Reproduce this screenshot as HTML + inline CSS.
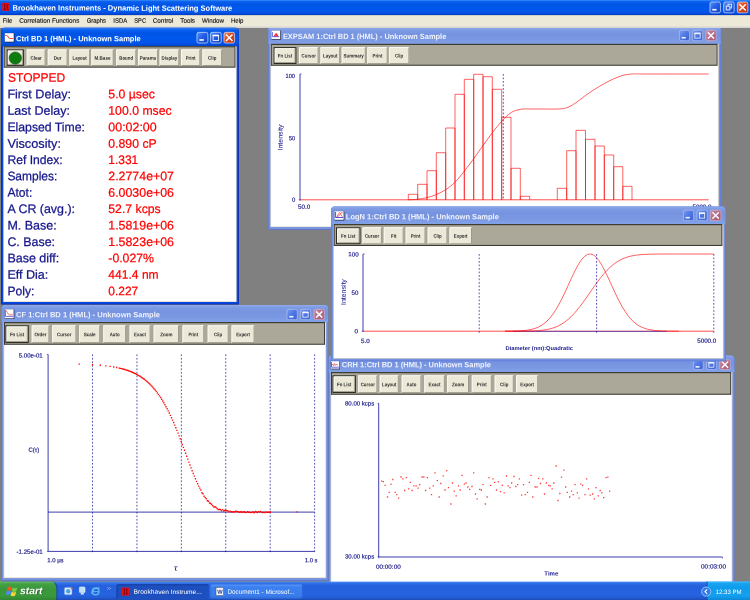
<!DOCTYPE html><html><head><meta charset="utf-8"><title>Brookhaven Instruments - Dynamic Light Scattering Software</title>
<style>
html,body{margin:0;padding:0}
body{width:750px;height:600px;overflow:hidden;background:#808080;position:relative;font-family:"Liberation Sans",sans-serif}
.l{position:absolute;left:0;top:0;width:750px;height:600px}
#scr{position:absolute;left:-20px;top:-20px;width:790px;height:640px;background:#808080;filter:blur(0.32px)}
#scr>div{position:absolute;left:20px;top:20px;width:750px;height:600px}
svg{position:absolute;left:0;top:0;overflow:visible;will-change:transform}
svg text{font-family:"Liberation Sans",sans-serif;white-space:pre;text-rendering:geometricPrecision}
</style></head><body>
<div id="scr"><div>
<svg width="0" height="0" style="position:absolute"><defs><linearGradient id="gtM" x1="0" y1="0" x2="0" y2="1"><stop offset="0" stop-color="#3a8cfa"/><stop offset="0.1" stop-color="#0b62ee"/><stop offset="0.28" stop-color="#0055e6"/><stop offset="0.55" stop-color="#0058ec"/><stop offset="0.8" stop-color="#0356ea"/><stop offset="0.93" stop-color="#0046d2"/><stop offset="1" stop-color="#0034b8"/></linearGradient><linearGradient id="gtA" x1="0" y1="0" x2="0" y2="1"><stop offset="0" stop-color="#2f7ff8"/><stop offset="0.12" stop-color="#0a5fee"/><stop offset="0.3" stop-color="#0054e4"/><stop offset="0.6" stop-color="#0058ec"/><stop offset="0.85" stop-color="#0352e4"/><stop offset="1" stop-color="#0040c8"/></linearGradient><linearGradient id="gtI" x1="0" y1="0" x2="0" y2="1"><stop offset="0" stop-color="#8fabec"/><stop offset="0.14" stop-color="#7d9ae4"/><stop offset="0.4" stop-color="#7693e0"/><stop offset="0.7" stop-color="#7a98e2"/><stop offset="1" stop-color="#82a2e8"/></linearGradient><linearGradient id="gbA" x1="0" y1="0" x2="1" y2="1"><stop offset="0" stop-color="#5a94f6"/><stop offset="0.45" stop-color="#2560e8"/><stop offset="1" stop-color="#143ec0"/></linearGradient><linearGradient id="gcA" x1="0" y1="0" x2="1" y2="1"><stop offset="0" stop-color="#ee8a68"/><stop offset="0.45" stop-color="#de4a20"/><stop offset="1" stop-color="#b82c0c"/></linearGradient><linearGradient id="gbI" x1="0" y1="0" x2="1" y2="1"><stop offset="0" stop-color="#7c9cf0"/><stop offset="0.5" stop-color="#4e76e4"/><stop offset="1" stop-color="#3c60d2"/></linearGradient><linearGradient id="gcI" x1="0" y1="0" x2="1" y2="1"><stop offset="0" stop-color="#cc8ea2"/><stop offset="0.5" stop-color="#b86880"/><stop offset="1" stop-color="#a6546e"/></linearGradient><linearGradient id="gTask" x1="0" y1="0" x2="0" y2="1"><stop offset="0" stop-color="#4a8ef4"/><stop offset="0.09" stop-color="#2f6fe8"/><stop offset="0.22" stop-color="#2560dc"/><stop offset="0.7" stop-color="#2663e0"/><stop offset="0.88" stop-color="#2259d0"/><stop offset="1" stop-color="#1a45a8"/></linearGradient><linearGradient id="gStart" x1="0" y1="0" x2="0" y2="1"><stop offset="0" stop-color="#6cbc6c"/><stop offset="0.12" stop-color="#43a043"/><stop offset="0.4" stop-color="#3a963a"/><stop offset="0.75" stop-color="#3b983b"/><stop offset="1" stop-color="#2f842f"/></linearGradient><linearGradient id="gTray" x1="0" y1="0" x2="0" y2="1"><stop offset="0" stop-color="#3cc0fa"/><stop offset="0.1" stop-color="#18a4f0"/><stop offset="0.3" stop-color="#109cec"/><stop offset="0.75" stop-color="#13a0ee"/><stop offset="1" stop-color="#0c86d4"/></linearGradient><linearGradient id="gTb2" x1="0" y1="0" x2="0" y2="1"><stop offset="0" stop-color="#5a98f8"/><stop offset="0.18" stop-color="#3c80f0"/><stop offset="0.8" stop-color="#3a7cec"/><stop offset="1" stop-color="#2f68d4"/></linearGradient></defs></svg>
<div class="l"><svg width="750" height="600" viewBox="0 0 750 600"><rect x="-20.00" y="-20.00" width="790.00" height="20.50" fill="#3a8cfa"/><rect x="-20.00" y="0.00" width="790.00" height="15.20" fill="url(#gtM)"/><rect x="-20.00" y="15.20" width="790.00" height="11.60" fill="#ece9d8"/><rect x="-20.00" y="26.70" width="790.00" height="1.00" fill="#fbfaf5"/><rect x="2.20" y="2.80" width="7.20" height="8.10" fill="#e8101c"/><path d="M3.4 4.2h2.4M4.6 4.2v5.4M3.4 9.6h2.4M8.6 4.4h-1.6v5h1.6M7 6.9h1.2" stroke="#7a0008" stroke-width="0.9" fill="none"/><text x="12.50" y="10.56" transform="rotate(0.04 12.5 10.6)" font-size="7.7" fill="#fff" font-weight="bold" textLength="219.80" lengthAdjust="spacingAndGlyphs">Brookhaven Instruments - Dynamic Light Scattering Software</text><text x="2.70" y="22.76" transform="rotate(0.04 2.7 22.8)" font-size="6.3" fill="#0a0a0a" textLength="9.60" lengthAdjust="spacingAndGlyphs" stroke="#0a0a0a" stroke-width="0.12">File</text><text x="19.30" y="22.76" transform="rotate(0.04 19.3 22.8)" font-size="6.3" fill="#0a0a0a" textLength="60.00" lengthAdjust="spacingAndGlyphs" stroke="#0a0a0a" stroke-width="0.12">Correlation Functions</text><text x="86.70" y="22.76" transform="rotate(0.04 86.7 22.8)" font-size="6.3" fill="#0a0a0a" textLength="19.30" lengthAdjust="spacingAndGlyphs" stroke="#0a0a0a" stroke-width="0.12">Graphs</text><text x="113.30" y="22.76" transform="rotate(0.04 113.3 22.8)" font-size="6.3" fill="#0a0a0a" textLength="14.00" lengthAdjust="spacingAndGlyphs" stroke="#0a0a0a" stroke-width="0.12">ISDA</text><text x="134.30" y="22.76" transform="rotate(0.04 134.3 22.8)" font-size="6.3" fill="#0a0a0a" textLength="11.70" lengthAdjust="spacingAndGlyphs" stroke="#0a0a0a" stroke-width="0.12">SPC</text><text x="152.70" y="22.76" transform="rotate(0.04 152.7 22.8)" font-size="6.3" fill="#0a0a0a" textLength="20.60" lengthAdjust="spacingAndGlyphs" stroke="#0a0a0a" stroke-width="0.12">Control</text><text x="180.30" y="22.76" transform="rotate(0.04 180.3 22.8)" font-size="6.3" fill="#0a0a0a" textLength="14.70" lengthAdjust="spacingAndGlyphs" stroke="#0a0a0a" stroke-width="0.12">Tools</text><text x="202.00" y="22.76" transform="rotate(0.04 202.0 22.8)" font-size="6.3" fill="#0a0a0a" textLength="22.00" lengthAdjust="spacingAndGlyphs" stroke="#0a0a0a" stroke-width="0.12">Window</text><text x="230.90" y="22.76" transform="rotate(0.04 230.9 22.8)" font-size="6.3" fill="#0a0a0a" textLength="12.60" lengthAdjust="spacingAndGlyphs" stroke="#0a0a0a" stroke-width="0.12">Help</text><rect x="709.95" y="1.95" width="10.50" height="10.90" rx="1.7" fill="url(#gbA)" stroke="#e6ecfc" stroke-opacity="0.95" stroke-width="0.7"/><rect x="712.29" y="8.91" width="4.26" height="1.6" fill="#fff"/><rect x="723.65" y="1.95" width="10.50" height="10.90" rx="1.7" fill="url(#gbA)" stroke="#e6ecfc" stroke-opacity="0.95" stroke-width="0.7"/><rect x="728.02" y="4.12" width="3.65" height="3.85" fill="none" stroke="#fff" stroke-width="0.8"/><rect x="726.22" y="6.12" width="3.65" height="3.85" fill="#2a64e8" stroke="#fff" stroke-width="0.8"/><rect x="737.35" y="1.95" width="10.50" height="10.90" rx="1.7" fill="url(#gcA)" stroke="#e6ecfc" stroke-opacity="0.95" stroke-width="0.7"/><path d="M739.41 4.21L745.79 10.59M745.79 4.21L739.41 10.59" stroke="#fff" stroke-width="1.5" fill="none"/></svg></div>
<div class="l"><svg width="750" height="600" viewBox="0 0 750 600"><path d="M268.10 229.70V29.10Q268.10 27.90 269.30 27.90H719.80Q721.00 27.90 721.00 29.10V229.70Z" fill="#6079d4"/><path d="M268.80 228.90V29.28Q268.80 28.20 269.88 28.20H719.22Q720.30 28.20 720.30 29.28V228.90Z" fill="#7390e2"/><path d="M268.40 44.10V29.10Q268.40 27.90 269.60 27.90H719.50Q720.70 27.90 720.70 29.10V44.10Z" fill="url(#gtI)"/><rect x="270.30" y="44.10" width="448.50" height="183.00" fill="#dcd8c4"/><rect x="271.10" y="44.10" width="446.90" height="182.30" fill="#fff"/><rect x="270.80" y="43.80" width="446.80" height="22.00" fill="#3e3c32"/><rect x="271.80" y="45.00" width="444.80" height="19.70" fill="#aca899"/><rect x="273.60" y="47.10" width="22.80" height="16.90" fill="#2c2b24"/><rect x="274.70" y="48.20" width="20.60" height="14.70" fill="#ece9d8"/><path d="M275.10 62.50V48.60H294.90" stroke="#fff" stroke-width="0.8" fill="none"/><path d="M275.10 62.50H294.90V48.60" stroke="#9a9788" stroke-width="0.8" fill="none"/><rect x="299.00" y="47.10" width="19.50" height="16.90" fill="#ece9d8"/><path d="M299.40 63.60V47.50H318.10" stroke="#fff" stroke-width="0.8" fill="none"/><path d="M299.40 63.60H318.10V47.50" stroke="#8a8778" stroke-width="0.8" fill="none"/><rect x="320.50" y="47.10" width="19.50" height="16.90" fill="#ece9d8"/><path d="M320.90 63.60V47.50H339.60" stroke="#fff" stroke-width="0.8" fill="none"/><path d="M320.90 63.60H339.60V47.50" stroke="#8a8778" stroke-width="0.8" fill="none"/><rect x="341.70" y="47.10" width="24.00" height="16.90" fill="#ece9d8"/><path d="M342.10 63.60V47.50H365.30" stroke="#fff" stroke-width="0.8" fill="none"/><path d="M342.10 63.60H365.30V47.50" stroke="#8a8778" stroke-width="0.8" fill="none"/><rect x="367.30" y="47.10" width="20.30" height="16.90" fill="#ece9d8"/><path d="M367.70 63.60V47.50H387.20" stroke="#fff" stroke-width="0.8" fill="none"/><path d="M367.70 63.60H387.20V47.50" stroke="#8a8778" stroke-width="0.8" fill="none"/><rect x="389.00" y="47.10" width="20.30" height="16.90" fill="#ece9d8"/><path d="M389.40 63.60V47.50H408.90" stroke="#fff" stroke-width="0.8" fill="none"/><path d="M389.40 63.60H408.90V47.50" stroke="#8a8778" stroke-width="0.8" fill="none"/><rect x="679.35" y="30.35" width="10.10" height="10.30" rx="1.7" fill="url(#gbI)" stroke="#b9c8f4" stroke-opacity="0.9" stroke-width="0.7"/><rect x="681.59" y="36.93" width="4.10" height="1.6" fill="#f2f4fd"/><rect x="692.35" y="30.35" width="10.30" height="10.30" rx="1.7" fill="url(#gbI)" stroke="#b9c8f4" stroke-opacity="0.9" stroke-width="0.7"/><rect x="694.86" y="33.36" width="5.28" height="4.78" fill="none" stroke="#f2f4fd" stroke-width="0.8"/><rect x="694.46" y="32.56" width="6.08" height="1.6" fill="#f2f4fd"/><rect x="705.85" y="30.35" width="10.30" height="10.30" rx="1.7" fill="url(#gcI)" stroke="#d2bcd6" stroke-opacity="0.9" stroke-width="0.7"/><path d="M707.87 32.37L714.13 38.63M714.13 32.37L707.87 38.63" stroke="#f2f4fd" stroke-width="1.5" fill="none"/><text x="282.90" y="38.96" transform="rotate(0.04 282.9 39.0)" font-size="7.7" fill="#eef1fc" font-weight="bold" textLength="163.40" lengthAdjust="spacingAndGlyphs">EXPSAM 1:Ctrl BD 1 (HML) - Unknown Sample</text><text x="277.87" y="57.61" transform="rotate(0.04 277.9 57.6)" font-size="5.2" fill="#2a2a2a" font-weight="bold" textLength="14.25" lengthAdjust="spacingAndGlyphs">Fn List</text><text x="301.62" y="57.61" transform="rotate(0.04 301.6 57.6)" font-size="5.2" fill="#2a2a2a" font-weight="bold" textLength="14.25" lengthAdjust="spacingAndGlyphs">Cursor</text><text x="323.12" y="57.61" transform="rotate(0.04 323.1 57.6)" font-size="5.2" fill="#2a2a2a" font-weight="bold" textLength="14.26" lengthAdjust="spacingAndGlyphs">Layout</text><text x="343.54" y="57.61" transform="rotate(0.04 343.5 57.6)" font-size="5.2" fill="#2a2a2a" font-weight="bold" textLength="20.32" lengthAdjust="spacingAndGlyphs">Summary</text><text x="372.57" y="57.61" transform="rotate(0.04 372.6 57.6)" font-size="5.2" fill="#2a2a2a" font-weight="bold" textLength="9.77" lengthAdjust="spacingAndGlyphs">Print</text><text x="395.06" y="57.61" transform="rotate(0.04 395.1 57.6)" font-size="5.2" fill="#2a2a2a" font-weight="bold" textLength="8.18" lengthAdjust="spacingAndGlyphs">Clip</text><rect x="271.10" y="30.20" width="9.80" height="9.60" fill="#2a2e48" opacity="0.55"/><rect x="271.90" y="31.00" width="9.00" height="8.80" fill="#1c2038" opacity="0.7"/><rect x="271.40" y="30.50" width="8.80" height="8.60" fill="#fff"/><path d="M273.4 36.4C274.4 35.6 275 32.9 276.2 32.9C277.4 32.9 278 35.6 278.8 36.4Z" fill="#f63838"/><path d="M272.4 32V36.7H279.2" stroke="#3030d0" stroke-width="0.7" fill="none"/><path d="M408.30 199.8V194.30H417.70V199.8M417.70 199.8V184.30H427.00V199.8M427.00 199.8V170.70H436.30V199.8M436.30 199.8V152.70H445.70V199.8M445.70 199.8V128.00H455.00V199.8M455.00 199.8V94.30H464.30V199.8M464.30 199.8V79.30H473.70V199.8M473.70 199.8V74.30H483.00V199.8M483.00 199.8V76.70H492.30V199.8M492.30 199.8V89.30H501.70V199.8M501.70 199.8V117.30H511.00V199.8M511.00 199.8V168.30H520.30V199.8M520.30 199.8V196.30H529.70V199.8M557.30 199.8V188.30H566.70V199.8M566.70 199.8V150.70H576.00V199.8M576.00 199.8V130.30H585.50V199.8M585.50 199.8V139.30H595.00V199.8M595.00 199.8V146.00H604.30V199.8M604.30 199.8V155.00H613.70V199.8M613.70 199.8V166.70H622.80V199.8M622.80 199.8V186.30H632.00V199.8" stroke="#ff0000" stroke-width="0.62" fill="none"/><path d="M300.00 199.80L708.70 199.80" stroke="#ff0000" stroke-width="0.7" fill="none"/><path d="M408.30 199.80C409.87 199.70 414.58 199.59 417.70 199.23C420.82 198.86 423.90 198.39 427.00 197.61C430.10 196.84 433.18 195.90 436.30 194.58C439.42 193.26 442.58 191.74 445.70 189.67C448.82 187.61 451.90 185.27 455.00 182.19C458.10 179.11 461.18 175.12 464.30 171.20C467.42 167.28 470.58 162.92 473.70 158.64C476.82 154.37 479.90 149.89 483.00 145.57C486.10 141.25 489.18 136.80 492.30 132.74C495.42 128.69 498.58 124.58 501.70 121.23C504.82 117.88 507.90 114.61 511.00 112.63C514.10 110.65 517.18 109.96 520.30 109.35C523.42 108.74 525.92 109.05 529.70 108.99C533.48 108.93 538.40 108.99 543.00 108.99C547.60 108.99 553.35 109.19 557.30 108.99C561.25 108.79 563.58 108.84 566.70 107.79C569.82 106.74 572.87 104.73 576.00 102.67C579.13 100.61 582.33 97.69 585.50 95.43C588.67 93.17 591.87 91.11 595.00 89.13C598.13 87.14 601.18 85.24 604.30 83.52C607.42 81.81 610.62 80.21 613.70 78.86C616.78 77.50 619.75 76.22 622.80 75.41C625.85 74.60 628.30 74.23 632.00 74.00C635.70 73.77 632.22 74.00 645.00 74.00C657.78 74.00 698.08 74.00 708.70 74.00" stroke="#ff0000" stroke-width="0.62" fill="none"/><path d="M300.00 74.00L300.00 200.60" stroke="#0c0c98" stroke-width="0.8" fill="none"/><path d="M300.00 74.00L301.60 74.00" stroke="#0c0c98" stroke-width="0.6" fill="none"/><path d="M298.80 199.80L300.00 199.80" stroke="#0c0c98" stroke-width="0.6" fill="none"/><path d="M503.30 74.00V199.80" stroke="#0c0c98" stroke-width="0.7" stroke-dasharray="1.75 1.75" fill="none"/><text x="285.60" y="77.98" transform="rotate(0.04 285.6 78.0)" font-size="6.1" fill="#1c1c8c" textLength="9.40" lengthAdjust="spacingAndGlyphs" stroke="#1c1c8c" stroke-width="0.18">100</text><text x="288.90" y="140.18" transform="rotate(0.04 288.9 140.2)" font-size="6.1" fill="#1c1c8c" textLength="6.10" lengthAdjust="spacingAndGlyphs" stroke="#1c1c8c" stroke-width="0.18">50</text><text x="291.90" y="201.78" transform="rotate(0.04 291.9 201.8)" font-size="6.1" fill="#1c1c8c" textLength="3.30" lengthAdjust="spacingAndGlyphs" stroke="#1c1c8c" stroke-width="0.18">0</text><text x="298.00" y="208.78" transform="rotate(0.04 298.0 208.8)" font-size="6.1" fill="#1c1c8c" textLength="12.20" lengthAdjust="spacingAndGlyphs" stroke="#1c1c8c" stroke-width="0.18">50.0</text><text x="692.50" y="208.78" transform="rotate(0.04 692.5 208.8)" font-size="6.1" fill="#1c1c8c" textLength="19.00" lengthAdjust="spacingAndGlyphs" stroke="#1c1c8c" stroke-width="0.18">5000.0</text><text transform="translate(282.56 150.50) rotate(-90.04)" font-size="6.6" fill="#1c1c8c" stroke="#1c1c8c" stroke-width="0.08" textLength="26.00" lengthAdjust="spacingAndGlyphs">Intensity</text></svg></div>
<div class="l"><svg width="750" height="600" viewBox="0 0 750 600"><path d="M328.30 592.00V359.00Q328.30 355.40 331.90 355.40H731.00Q734.60 355.40 734.60 359.00V592.00Z" fill="#6079d4"/><path d="M329.00 591.20V358.94Q329.00 355.70 332.24 355.70H730.66Q733.90 355.70 733.90 358.94V591.20Z" fill="#7390e2"/><path d="M328.60 372.30V359.00Q328.60 355.40 332.20 355.40H730.70Q734.30 355.40 734.30 359.00V372.30Z" fill="url(#gtI)"/><rect x="330.50" y="372.30" width="401.90" height="217.10" fill="#dcd8c4"/><rect x="331.30" y="372.30" width="400.30" height="216.40" fill="#fff"/><rect x="331.00" y="372.00" width="400.20" height="22.80" fill="#3e3c32"/><rect x="332.00" y="373.20" width="398.20" height="20.50" fill="#aca899"/><rect x="332.50" y="375.30" width="23.40" height="17.70" fill="#2c2b24"/><rect x="333.60" y="376.40" width="21.20" height="15.50" fill="#ece9d8"/><path d="M334.00 391.50V376.80H354.40" stroke="#fff" stroke-width="0.8" fill="none"/><path d="M334.00 391.50H354.40V376.80" stroke="#9a9788" stroke-width="0.8" fill="none"/><rect x="358.30" y="375.30" width="19.00" height="17.70" fill="#ece9d8"/><path d="M358.70 392.60V375.70H376.90" stroke="#fff" stroke-width="0.8" fill="none"/><path d="M358.70 392.60H376.90V375.70" stroke="#8a8778" stroke-width="0.8" fill="none"/><rect x="379.70" y="375.30" width="19.00" height="17.70" fill="#ece9d8"/><path d="M380.10 392.60V375.70H398.30" stroke="#fff" stroke-width="0.8" fill="none"/><path d="M380.10 392.60H398.30V375.70" stroke="#8a8778" stroke-width="0.8" fill="none"/><rect x="401.70" y="375.30" width="19.60" height="17.70" fill="#ece9d8"/><path d="M402.10 392.60V375.70H420.90" stroke="#fff" stroke-width="0.8" fill="none"/><path d="M402.10 392.60H420.90V375.70" stroke="#8a8778" stroke-width="0.8" fill="none"/><rect x="424.30" y="375.30" width="20.50" height="17.70" fill="#ece9d8"/><path d="M424.70 392.60V375.70H444.40" stroke="#fff" stroke-width="0.8" fill="none"/><path d="M424.70 392.60H444.40V375.70" stroke="#8a8778" stroke-width="0.8" fill="none"/><rect x="447.20" y="375.30" width="21.70" height="17.70" fill="#ece9d8"/><path d="M447.60 392.60V375.70H468.50" stroke="#fff" stroke-width="0.8" fill="none"/><path d="M447.60 392.60H468.50V375.70" stroke="#8a8778" stroke-width="0.8" fill="none"/><rect x="471.80" y="375.30" width="19.90" height="17.70" fill="#ece9d8"/><path d="M472.20 392.60V375.70H491.30" stroke="#fff" stroke-width="0.8" fill="none"/><path d="M472.20 392.60H491.30V375.70" stroke="#8a8778" stroke-width="0.8" fill="none"/><rect x="494.70" y="375.30" width="19.00" height="17.70" fill="#ece9d8"/><path d="M495.10 392.60V375.70H513.30" stroke="#fff" stroke-width="0.8" fill="none"/><path d="M495.10 392.60H513.30V375.70" stroke="#8a8778" stroke-width="0.8" fill="none"/><rect x="516.10" y="375.30" width="22.00" height="17.70" fill="#ece9d8"/><path d="M516.50 392.60V375.70H537.70" stroke="#fff" stroke-width="0.8" fill="none"/><path d="M516.50 392.60H537.70V375.70" stroke="#8a8778" stroke-width="0.8" fill="none"/><rect x="693.35" y="359.85" width="9.80" height="9.70" rx="1.7" fill="url(#gbI)" stroke="#b9c8f4" stroke-opacity="0.9" stroke-width="0.7"/><rect x="695.52" y="366.05" width="3.99" height="1.6" fill="#f2f4fd"/><rect x="706.55" y="359.85" width="9.70" height="9.70" rx="1.7" fill="url(#gbI)" stroke="#b9c8f4" stroke-opacity="0.9" stroke-width="0.7"/><rect x="708.90" y="362.70" width="4.99" height="4.49" fill="none" stroke="#f2f4fd" stroke-width="0.8"/><rect x="708.50" y="361.90" width="5.79" height="1.6" fill="#f2f4fd"/><rect x="719.75" y="359.85" width="10.50" height="9.70" rx="1.7" fill="url(#gcI)" stroke="#d2bcd6" stroke-opacity="0.9" stroke-width="0.7"/><path d="M721.81 361.51L728.19 367.89M728.19 361.51L721.81 367.89" stroke="#f2f4fd" stroke-width="1.5" fill="none"/><text x="341.80" y="367.16" transform="rotate(0.04 341.8 367.2)" font-size="7.7" fill="#eef1fc" font-weight="bold" textLength="149.10" lengthAdjust="spacingAndGlyphs">CRH 1:Ctrl BD 1 (HML) - Unknown Sample</text><text x="337.07" y="386.21" transform="rotate(0.04 337.1 386.2)" font-size="5.2" fill="#2a2a2a" font-weight="bold" textLength="14.25" lengthAdjust="spacingAndGlyphs">Fn List</text><text x="360.67" y="386.21" transform="rotate(0.04 360.7 386.2)" font-size="5.2" fill="#2a2a2a" font-weight="bold" textLength="14.25" lengthAdjust="spacingAndGlyphs">Cursor</text><text x="382.07" y="386.21" transform="rotate(0.04 382.1 386.2)" font-size="5.2" fill="#2a2a2a" font-weight="bold" textLength="14.26" lengthAdjust="spacingAndGlyphs">Layout</text><text x="406.61" y="386.21" transform="rotate(0.04 406.6 386.2)" font-size="5.2" fill="#2a2a2a" font-weight="bold" textLength="9.77" lengthAdjust="spacingAndGlyphs">Auto</text><text x="428.61" y="386.21" transform="rotate(0.04 428.6 386.2)" font-size="5.2" fill="#2a2a2a" font-weight="bold" textLength="11.88" lengthAdjust="spacingAndGlyphs">Exact</text><text x="451.98" y="386.21" transform="rotate(0.04 452.0 386.2)" font-size="5.2" fill="#2a2a2a" font-weight="bold" textLength="12.14" lengthAdjust="spacingAndGlyphs">Zoom</text><text x="476.87" y="386.21" transform="rotate(0.04 476.9 386.2)" font-size="5.2" fill="#2a2a2a" font-weight="bold" textLength="9.77" lengthAdjust="spacingAndGlyphs">Print</text><text x="500.11" y="386.21" transform="rotate(0.04 500.1 386.2)" font-size="5.2" fill="#2a2a2a" font-weight="bold" textLength="8.18" lengthAdjust="spacingAndGlyphs">Clip</text><text x="520.24" y="386.21" transform="rotate(0.04 520.2 386.2)" font-size="5.2" fill="#2a2a2a" font-weight="bold" textLength="13.73" lengthAdjust="spacingAndGlyphs">Export</text><rect x="330.70" y="360.70" width="9.30" height="8.60" fill="#2a2e48" opacity="0.55"/><rect x="331.50" y="361.50" width="8.50" height="7.80" fill="#1c2038" opacity="0.7"/><rect x="331.00" y="361.00" width="8.30" height="7.60" fill="#fff"/><path d="M331.6 365.2l1-1.2 0.8 1.6 0.9-2 0.9 1.8 0.9-1.4 0.9 1.2 0.9-0.8" stroke="#f03030" stroke-width="0.6" fill="none"/><path d="M331.5 362V367.2H338.8" stroke="#2828c8" stroke-width="0.7" fill="none"/><path d="M378.70 403.30L378.70 557.00" stroke="#0c0c98" stroke-width="0.8" fill="none"/><path d="M377.50 403.30L378.70 403.30" stroke="#0c0c98" stroke-width="0.6" fill="none"/><path d="M377.50 556.40L378.70 556.40" stroke="#0c0c98" stroke-width="0.6" fill="none"/><path d="M378.70 557.00L722.40 557.00" stroke="#0c0c98" stroke-width="0.8" fill="none"/><path d="M722.40 557.00L722.40 558.40" stroke="#0c0c98" stroke-width="0.6" fill="none"/><path d="M378.70 557.00L378.70 558.40" stroke="#0c0c98" stroke-width="0.6" fill="none"/><text x="345.00" y="405.58" transform="rotate(0.04 345.0 405.6)" font-size="6.1" fill="#1c1c8c" textLength="29.20" lengthAdjust="spacingAndGlyphs" stroke="#1c1c8c" stroke-width="0.18">80.00 kcps</text><text x="345.00" y="558.38" transform="rotate(0.04 345.0 558.4)" font-size="6.1" fill="#1c1c8c" textLength="29.20" lengthAdjust="spacingAndGlyphs" stroke="#1c1c8c" stroke-width="0.18">30.00 kcps</text><text x="544.30" y="575.45" transform="rotate(0.04 544.3 575.4)" font-size="6.0" fill="#1c1c8c" font-weight="bold" textLength="14.00" lengthAdjust="spacingAndGlyphs">Time</text><text x="376.00" y="568.78" transform="rotate(0.04 376.0 568.8)" font-size="6.1" fill="#1c1c8c" textLength="24.70" lengthAdjust="spacingAndGlyphs" stroke="#1c1c8c" stroke-width="0.18">00:00:00</text><text x="701.00" y="568.48" transform="rotate(0.04 701.0 568.5)" font-size="6.1" fill="#1c1c8c" textLength="25.00" lengthAdjust="spacingAndGlyphs" stroke="#1c1c8c" stroke-width="0.18">00:03:00</text><path d="M381.02 481.17h1.3M382.68 481.67h1.3M384.52 485.33h1.3M386.85 497.00h1.3M388.52 492.33h1.3M390.35 484.17h1.3M392.18 479.50h1.3M394.52 492.33h1.3M396.18 494.67h1.3M398.02 498.17h1.3M400.35 477.00h1.3M402.18 478.83h1.3M404.02 490.50h1.3M405.68 477.67h1.3M408.02 488.83h1.3M409.68 482.33h1.3M411.52 490.50h1.3M413.35 485.83h1.3M415.52 485.83h1.3M417.35 488.17h1.3M419.02 484.67h1.3M421.35 477.00h1.3M423.18 477.00h1.3M425.02 490.50h1.3M426.68 477.67h1.3M429.02 488.17h1.3M430.85 494.67h1.3M432.52 485.83h1.3M434.35 472.83h1.3M436.68 480.67h1.3M438.52 497.00h1.3M440.18 483.50h1.3M442.52 475.83h1.3M444.35 490.00h1.3M446.02 470.67h1.3M447.85 487.67h1.3M450.18 504.00h1.3M451.85 483.00h1.3M453.68 491.17h1.3M455.52 495.83h1.3M457.85 485.83h1.3M459.52 490.00h1.3M461.35 475.33h1.3M463.68 484.17h1.3M465.35 483.00h1.3M467.18 487.00h1.3M469.02 489.33h1.3M471.35 486.50h1.3M473.02 472.83h1.3M474.85 494.00h1.3M476.52 498.83h1.3M479.02 489.33h1.3M480.68 490.00h1.3M482.35 484.67h1.3M484.68 504.00h1.3M486.52 497.00h1.3M488.35 477.67h1.3M490.02 485.33h1.3M492.35 478.83h1.3M494.02 482.33h1.3M495.85 490.00h1.3M497.68 481.83h1.3M499.85 491.67h1.3M501.68 485.33h1.3M503.52 492.83h1.3M505.85 476.00h1.3M507.52 485.83h1.3M509.35 487.67h1.3M511.02 483.00h1.3M513.35 476.50h1.3M515.18 486.50h1.3M517.02 484.67h1.3M518.68 478.83h1.3M521.02 495.17h1.3M522.85 484.67h1.3M524.52 494.67h1.3M526.85 492.33h1.3M528.68 482.33h1.3M530.35 475.33h1.3M532.18 497.00h1.3M534.52 487.00h1.3M536.35 487.00h1.3M538.02 478.33h1.3M539.85 483.50h1.3M542.18 478.83h1.3M543.85 494.00h1.3M545.68 483.00h1.3M548.02 485.33h1.3M549.68 485.83h1.3M551.52 488.83h1.3M553.18 483.00h1.3M555.52 466.00h1.3M557.35 500.50h1.3M559.18 493.50h1.3M560.85 477.17h1.3M563.18 470.17h1.3M565.02 487.00h1.3M566.68 492.33h1.3M569.02 497.00h1.3M570.85 491.17h1.3M572.52 494.67h1.3M574.35 484.67h1.3M576.68 492.83h1.3M578.35 498.17h1.3M580.18 484.17h1.3M582.02 485.33h1.3M584.35 494.67h1.3M586.02 478.83h1.3M587.85 488.83h1.3M589.52 495.17h1.3M592.02 494.00h1.3M593.68 498.83h1.3M595.35 487.67h1.3M597.68 495.83h1.3M599.52 490.50h1.3M601.18 492.83h1.3M603.02 497.67h1.3M605.35 477.67h1.3M607.18 477.17h1.3M609.02 491.17h1.3" stroke="#ff3c3c" stroke-width="1.3" fill="none"/></svg></div>
<div class="l"><svg width="750" height="600" viewBox="0 0 750 600"><path d="M331.00 361.30V210.00Q331.00 206.40 334.60 206.40H722.20Q725.80 206.40 725.80 210.00V361.30Z" fill="#6079d4"/><path d="M331.70 360.50V209.94Q331.70 206.70 334.94 206.70H721.86Q725.10 206.70 725.10 209.94V360.50Z" fill="#7390e2"/><path d="M331.30 224.30V210.00Q331.30 206.40 334.90 206.40H721.90Q725.50 206.40 725.50 210.00V224.30Z" fill="url(#gtI)"/><rect x="333.20" y="224.30" width="390.40" height="134.40" fill="#dcd8c4"/><rect x="334.00" y="224.30" width="388.80" height="133.70" fill="#fff"/><rect x="333.70" y="224.00" width="388.70" height="22.00" fill="#3e3c32"/><rect x="334.70" y="225.20" width="386.70" height="19.70" fill="#aca899"/><rect x="336.00" y="227.30" width="24.50" height="16.90" fill="#2c2b24"/><rect x="337.10" y="228.40" width="22.30" height="14.70" fill="#ece9d8"/><path d="M337.50 242.70V228.80H359.00" stroke="#fff" stroke-width="0.8" fill="none"/><path d="M337.50 242.70H359.00V228.80" stroke="#9a9788" stroke-width="0.8" fill="none"/><rect x="362.40" y="227.30" width="19.40" height="16.90" fill="#ece9d8"/><path d="M362.80 243.80V227.70H381.40" stroke="#fff" stroke-width="0.8" fill="none"/><path d="M362.80 243.80H381.40V227.70" stroke="#8a8778" stroke-width="0.8" fill="none"/><rect x="383.80" y="227.30" width="19.80" height="16.90" fill="#ece9d8"/><path d="M384.20 243.80V227.70H403.20" stroke="#fff" stroke-width="0.8" fill="none"/><path d="M384.20 243.80H403.20V227.70" stroke="#8a8778" stroke-width="0.8" fill="none"/><rect x="405.70" y="227.30" width="19.70" height="16.90" fill="#ece9d8"/><path d="M406.10 243.80V227.70H425.00" stroke="#fff" stroke-width="0.8" fill="none"/><path d="M406.10 243.80H425.00V227.70" stroke="#8a8778" stroke-width="0.8" fill="none"/><rect x="427.70" y="227.30" width="19.60" height="16.90" fill="#ece9d8"/><path d="M428.10 243.80V227.70H446.90" stroke="#fff" stroke-width="0.8" fill="none"/><path d="M428.10 243.80H446.90V227.70" stroke="#8a8778" stroke-width="0.8" fill="none"/><rect x="449.50" y="227.30" width="22.40" height="16.90" fill="#ece9d8"/><path d="M449.90 243.80V227.70H471.50" stroke="#fff" stroke-width="0.8" fill="none"/><path d="M449.90 243.80H471.50V227.70" stroke="#8a8778" stroke-width="0.8" fill="none"/><rect x="683.35" y="210.15" width="10.30" height="10.50" rx="1.7" fill="url(#gbI)" stroke="#b9c8f4" stroke-opacity="0.9" stroke-width="0.7"/><rect x="685.64" y="216.86" width="4.18" height="1.6" fill="#f2f4fd"/><rect x="696.85" y="210.15" width="10.30" height="10.50" rx="1.7" fill="url(#gbI)" stroke="#b9c8f4" stroke-opacity="0.9" stroke-width="0.7"/><rect x="699.36" y="213.16" width="5.28" height="4.98" fill="none" stroke="#f2f4fd" stroke-width="0.8"/><rect x="698.96" y="212.36" width="6.08" height="1.6" fill="#f2f4fd"/><rect x="710.35" y="210.15" width="10.60" height="10.50" rx="1.7" fill="url(#gcI)" stroke="#d2bcd6" stroke-opacity="0.9" stroke-width="0.7"/><path d="M712.43 212.18L718.87 218.62M718.87 212.18L712.43 218.62" stroke="#f2f4fd" stroke-width="1.5" fill="none"/><text x="345.80" y="219.16" transform="rotate(0.04 345.8 219.2)" font-size="7.7" fill="#eef1fc" font-weight="bold" textLength="153.10" lengthAdjust="spacingAndGlyphs">LogN 1:Ctrl BD 1 (HML) - Unknown Sample</text><text x="341.12" y="237.81" transform="rotate(0.04 341.1 237.8)" font-size="5.2" fill="#2a2a2a" font-weight="bold" textLength="14.25" lengthAdjust="spacingAndGlyphs">Fn List</text><text x="364.97" y="237.81" transform="rotate(0.04 365.0 237.8)" font-size="5.2" fill="#2a2a2a" font-weight="bold" textLength="14.25" lengthAdjust="spacingAndGlyphs">Cursor</text><text x="391.06" y="237.81" transform="rotate(0.04 391.1 237.8)" font-size="5.2" fill="#2a2a2a" font-weight="bold" textLength="5.28" lengthAdjust="spacingAndGlyphs">Fit</text><text x="410.67" y="237.81" transform="rotate(0.04 410.7 237.8)" font-size="5.2" fill="#2a2a2a" font-weight="bold" textLength="9.77" lengthAdjust="spacingAndGlyphs">Print</text><text x="433.41" y="237.81" transform="rotate(0.04 433.4 237.8)" font-size="5.2" fill="#2a2a2a" font-weight="bold" textLength="8.18" lengthAdjust="spacingAndGlyphs">Clip</text><text x="453.84" y="237.81" transform="rotate(0.04 453.8 237.8)" font-size="5.2" fill="#2a2a2a" font-weight="bold" textLength="13.73" lengthAdjust="spacingAndGlyphs">Export</text><rect x="334.30" y="210.90" width="10.00" height="9.60" fill="#2a2e48" opacity="0.55"/><rect x="335.10" y="211.70" width="9.20" height="8.80" fill="#1c2038" opacity="0.7"/><rect x="334.60" y="211.20" width="9.00" height="8.60" fill="#fff"/><path d="M336.4 217C338 216.6 338.2 212.7 339.4 212.7C340.6 212.7 341 216.4 342.8 217M337 217C339.8 216.6 339.6 212.5 342.8 212.3" stroke="#f03030" stroke-width="0.7" fill="none"/><path d="M335.6 212V217.5H343" stroke="#2020d0" stroke-width="0.8" fill="none"/><path d="M363.00 331.20L713.80 331.20" stroke="#ff0000" stroke-width="0.7" fill="none"/><path d="M513.00 331.40L667.00 331.40" stroke="#3030c0" stroke-width="0.7" fill="none"/><path d="M505.00 331.17C505.50 331.17 507.00 331.16 508.00 331.15C509.00 331.14 510.00 331.13 511.00 331.12C512.00 331.10 513.00 331.09 514.00 331.06C515.00 331.04 516.00 331.02 517.00 330.98C518.00 330.94 519.00 330.90 520.00 330.85C521.00 330.79 522.00 330.73 523.00 330.64C524.00 330.56 525.00 330.47 526.00 330.34C527.00 330.22 528.00 330.08 529.00 329.90C530.00 329.73 531.00 329.53 532.00 329.28C533.00 329.03 534.00 328.75 535.00 328.41C536.00 328.07 537.00 327.69 538.00 327.23C539.00 326.78 540.00 326.27 541.00 325.66C542.00 325.06 543.00 324.40 544.00 323.63C545.00 322.86 546.00 322.01 547.00 321.04C548.00 320.08 549.00 319.02 550.00 317.85C551.00 316.67 552.00 315.38 553.00 313.98C554.00 312.58 555.00 311.07 556.00 309.44C557.00 307.82 558.00 306.08 559.00 304.25C560.00 302.42 561.00 300.47 562.00 298.46C563.00 296.46 564.00 294.35 565.00 292.22C566.00 290.09 567.00 287.88 568.00 285.69C569.00 283.51 570.00 281.28 571.00 279.12C572.00 276.97 573.00 274.80 574.00 272.77C575.00 270.74 576.00 268.75 577.00 266.94C578.00 265.12 579.00 263.40 580.00 261.90C581.00 260.41 582.00 259.05 583.00 257.95C584.00 256.84 585.00 255.93 586.00 255.28C587.00 254.64 588.00 254.22 589.00 254.07C590.00 253.92 591.00 254.02 592.00 254.37C593.00 254.73 594.00 255.35 595.00 256.18C596.00 257.02 597.00 258.11 598.00 259.39C599.00 260.66 600.00 262.17 601.00 263.80C602.00 265.44 603.00 267.28 604.00 269.19C605.00 271.10 606.00 273.18 607.00 275.27C608.00 277.36 609.00 279.56 610.00 281.74C611.00 283.92 612.00 286.15 613.00 288.32C614.00 290.49 615.00 292.67 616.00 294.76C617.00 296.85 618.00 298.90 619.00 300.84C620.00 302.78 621.00 304.65 622.00 306.40C623.00 308.15 624.00 309.81 625.00 311.34C626.00 312.88 627.00 314.30 628.00 315.61C629.00 316.92 630.00 318.11 631.00 319.20C632.00 320.29 633.00 321.26 634.00 322.15C635.00 323.03 636.00 323.80 637.00 324.50C638.00 325.20 639.00 325.80 640.00 326.34C641.00 326.88 642.00 327.34 643.00 327.75C644.00 328.16 645.00 328.49 646.00 328.79C647.00 329.10 648.00 329.34 649.00 329.56C650.00 329.77 651.00 329.95 652.00 330.10C653.00 330.25 654.00 330.37 655.00 330.48C656.00 330.58 657.00 330.66 658.00 330.73C659.00 330.81 660.00 330.86 661.00 330.91C662.00 330.95 663.00 330.99 664.00 331.02C665.00 331.05 666.00 331.07 667.00 331.09C668.00 331.11 669.00 331.12 670.00 331.13C671.00 331.15 672.00 331.15 673.00 331.16C674.00 331.17 675.00 331.17 676.00 331.18C677.00 331.18 678.50 331.19 679.00 331.19" stroke="#ff0000" stroke-width="0.62" fill="none"/><path d="M505.00 331.20C505.50 331.20 507.00 331.20 508.00 331.20C509.00 331.19 510.00 331.19 511.00 331.19C512.00 331.19 513.00 331.19 514.00 331.19C515.00 331.18 516.00 331.18 517.00 331.18C518.00 331.17 519.00 331.17 520.00 331.16C521.00 331.15 522.00 331.15 523.00 331.13C524.00 331.12 525.00 331.11 526.00 331.10C527.00 331.08 528.00 331.06 529.00 331.04C530.00 331.01 531.00 330.98 532.00 330.95C533.00 330.91 534.00 330.87 535.00 330.82C536.00 330.76 537.00 330.70 538.00 330.63C539.00 330.55 540.00 330.47 541.00 330.36C542.00 330.26 543.00 330.14 544.00 330.00C545.00 329.85 546.00 329.69 547.00 329.50C548.00 329.31 549.00 329.10 550.00 328.84C551.00 328.59 552.00 328.31 553.00 327.99C554.00 327.66 555.00 327.31 556.00 326.90C557.00 326.49 558.00 326.04 559.00 325.53C560.00 325.02 561.00 324.47 562.00 323.86C563.00 323.24 564.00 322.57 565.00 321.84C566.00 321.11 567.00 320.32 568.00 319.47C569.00 318.62 570.00 317.70 571.00 316.73C572.00 315.75 573.00 314.72 574.00 313.62C575.00 312.53 576.00 311.37 577.00 310.17C578.00 308.97 579.00 307.71 580.00 306.42C581.00 305.12 582.00 303.77 583.00 302.41C584.00 301.04 585.00 299.63 586.00 298.21C587.00 296.79 588.00 295.34 589.00 293.90C590.00 292.46 591.00 291.00 592.00 289.57C593.00 288.13 594.00 286.70 595.00 285.30C596.00 283.89 597.00 282.51 598.00 281.16C599.00 279.82 600.00 278.51 601.00 277.25C602.00 275.99 603.00 274.77 604.00 273.61C605.00 272.45 606.00 271.34 607.00 270.29C608.00 269.25 609.00 268.26 610.00 267.33C611.00 266.40 612.00 265.54 613.00 264.74C614.00 263.93 615.00 263.19 616.00 262.51C617.00 261.83 618.00 261.20 619.00 260.63C620.00 260.06 621.00 259.55 622.00 259.09C623.00 258.62 624.00 258.21 625.00 257.84C626.00 257.46 627.00 257.14 628.00 256.84C629.00 256.55 630.00 256.30 631.00 256.07C632.00 255.84 633.00 255.65 634.00 255.48C635.00 255.31 636.00 255.17 637.00 255.04C638.00 254.92 639.00 254.81 640.00 254.72C641.00 254.63 642.00 254.55 643.00 254.49C644.00 254.42 645.00 254.37 646.00 254.33C647.00 254.28 648.00 254.24 649.00 254.21C650.00 254.18 651.00 254.16 652.00 254.14C653.00 254.12 654.00 254.10 655.00 254.09C656.00 254.07 657.00 254.06 658.00 254.05C659.00 254.04 660.00 254.04 661.00 254.03C662.00 254.03 663.00 254.02 664.00 254.02C665.00 254.02 666.00 254.01 667.00 254.01C668.00 254.01 669.00 254.01 670.00 254.01C671.00 254.01 672.00 254.00 673.00 254.00C674.00 254.00 675.00 254.00 676.00 254.00C677.00 254.00 678.50 254.00 679.00 254.00L713.8 254.0" stroke="#ff0000" stroke-width="0.62" fill="none"/><path d="M363.00 254.00L363.00 332.00" stroke="#0c0c98" stroke-width="0.8" fill="none"/><path d="M363.00 254.00L364.60 254.00" stroke="#0c0c98" stroke-width="0.6" fill="none"/><path d="M361.80 331.20L363.00 331.20" stroke="#0c0c98" stroke-width="0.6" fill="none"/><path d="M479.20 254.00V333.00" stroke="#0c0c98" stroke-width="0.7" stroke-dasharray="1.75 1.75" fill="none"/><path d="M596.60 254.00V333.00" stroke="#0c0c98" stroke-width="0.7" stroke-dasharray="1.75 1.75" fill="none"/><path d="M713.80 254.00V333.00" stroke="#0c0c98" stroke-width="0.7" stroke-dasharray="1.75 1.75" fill="none"/><text x="348.30" y="256.38" transform="rotate(0.04 348.3 256.4)" font-size="6.1" fill="#1c1c8c" textLength="10.30" lengthAdjust="spacingAndGlyphs" stroke="#1c1c8c" stroke-width="0.18">100</text><text x="351.60" y="294.68" transform="rotate(0.04 351.6 294.7)" font-size="6.1" fill="#1c1c8c" textLength="6.90" lengthAdjust="spacingAndGlyphs" stroke="#1c1c8c" stroke-width="0.18">50</text><text x="354.60" y="333.38" transform="rotate(0.04 354.6 333.4)" font-size="6.1" fill="#1c1c8c" textLength="3.60" lengthAdjust="spacingAndGlyphs" stroke="#1c1c8c" stroke-width="0.18">0</text><text x="361.00" y="342.98" transform="rotate(0.04 361.0 343.0)" font-size="6.1" fill="#1c1c8c" textLength="8.70" lengthAdjust="spacingAndGlyphs" stroke="#1c1c8c" stroke-width="0.18">5.0</text><text x="697.20" y="342.78" transform="rotate(0.04 697.2 342.8)" font-size="6.1" fill="#1c1c8c" textLength="19.10" lengthAdjust="spacingAndGlyphs" stroke="#1c1c8c" stroke-width="0.18">5000.0</text><text x="505.50" y="350.00" transform="rotate(0.04 505.5 350.0)" font-size="5.6" fill="#1c1c8c" font-weight="bold" textLength="67.50" lengthAdjust="spacingAndGlyphs">Diameter (nm):Quadratic</text><text transform="translate(345.86 305.00) rotate(-90.04)" font-size="6.6" fill="#1c1c8c" stroke="#1c1c8c" stroke-width="0.08" textLength="25.80" lengthAdjust="spacingAndGlyphs">Intensity</text></svg></div>
<div class="l"><svg width="750" height="600" viewBox="0 0 750 600"><path d="M1.30 580.70V308.70Q1.30 305.10 4.90 305.10H324.80Q328.40 305.10 328.40 308.70V580.70Z" fill="#6079d4"/><path d="M2.00 579.90V308.64Q2.00 305.40 5.24 305.40H324.46Q327.70 305.40 327.70 308.64V579.90Z" fill="#7390e2"/><path d="M1.60 322.30V308.70Q1.60 305.10 5.20 305.10H324.50Q328.10 305.10 328.10 308.70V322.30Z" fill="url(#gtI)"/><rect x="3.50" y="322.30" width="322.70" height="255.80" fill="#dcd8c4"/><rect x="4.30" y="322.30" width="321.10" height="255.10" fill="#fff"/><rect x="4.00" y="322.00" width="321.00" height="22.80" fill="#3e3c32"/><rect x="5.00" y="323.20" width="319.00" height="20.50" fill="#aca899"/><rect x="5.40" y="325.30" width="23.40" height="17.70" fill="#2c2b24"/><rect x="6.50" y="326.40" width="21.20" height="15.50" fill="#ece9d8"/><path d="M6.90 341.50V326.80H27.30" stroke="#fff" stroke-width="0.8" fill="none"/><path d="M6.90 341.50H27.30V326.80" stroke="#9a9788" stroke-width="0.8" fill="none"/><rect x="31.70" y="325.30" width="17.60" height="17.70" fill="#ece9d8"/><path d="M32.10 342.60V325.70H48.90" stroke="#fff" stroke-width="0.8" fill="none"/><path d="M32.10 342.60H48.90V325.70" stroke="#8a8778" stroke-width="0.8" fill="none"/><rect x="52.20" y="325.30" width="24.10" height="17.70" fill="#ece9d8"/><path d="M52.60 342.60V325.70H75.90" stroke="#fff" stroke-width="0.8" fill="none"/><path d="M52.60 342.60H75.90V325.70" stroke="#8a8778" stroke-width="0.8" fill="none"/><rect x="79.20" y="325.30" width="20.90" height="17.70" fill="#ece9d8"/><path d="M79.60 342.60V325.70H99.70" stroke="#fff" stroke-width="0.8" fill="none"/><path d="M79.60 342.60H99.70V325.70" stroke="#8a8778" stroke-width="0.8" fill="none"/><rect x="103.30" y="325.30" width="22.70" height="17.70" fill="#ece9d8"/><path d="M103.70 342.60V325.70H125.60" stroke="#fff" stroke-width="0.8" fill="none"/><path d="M103.70 342.60H125.60V325.70" stroke="#8a8778" stroke-width="0.8" fill="none"/><rect x="129.60" y="325.30" width="20.90" height="17.70" fill="#ece9d8"/><path d="M130.00 342.60V325.70H150.10" stroke="#fff" stroke-width="0.8" fill="none"/><path d="M130.00 342.60H150.10V325.70" stroke="#8a8778" stroke-width="0.8" fill="none"/><rect x="153.70" y="325.30" width="25.20" height="17.70" fill="#ece9d8"/><path d="M154.10 342.60V325.70H178.50" stroke="#fff" stroke-width="0.8" fill="none"/><path d="M154.10 342.60H178.50V325.70" stroke="#8a8778" stroke-width="0.8" fill="none"/><rect x="182.50" y="325.30" width="21.60" height="17.70" fill="#ece9d8"/><path d="M182.90 342.60V325.70H203.70" stroke="#fff" stroke-width="0.8" fill="none"/><path d="M182.90 342.60H203.70V325.70" stroke="#8a8778" stroke-width="0.8" fill="none"/><rect x="207.70" y="325.30" width="20.90" height="17.70" fill="#ece9d8"/><path d="M208.10 342.60V325.70H228.20" stroke="#fff" stroke-width="0.8" fill="none"/><path d="M208.10 342.60H228.20V325.70" stroke="#8a8778" stroke-width="0.8" fill="none"/><rect x="231.50" y="325.30" width="23.00" height="17.70" fill="#ece9d8"/><path d="M231.90 342.60V325.70H254.10" stroke="#fff" stroke-width="0.8" fill="none"/><path d="M231.90 342.60H254.10V325.70" stroke="#8a8778" stroke-width="0.8" fill="none"/><rect x="286.95" y="309.35" width="10.30" height="10.30" rx="1.7" fill="url(#gbI)" stroke="#b9c8f4" stroke-opacity="0.9" stroke-width="0.7"/><rect x="289.24" y="315.93" width="4.18" height="1.6" fill="#f2f4fd"/><rect x="300.35" y="309.35" width="10.30" height="10.30" rx="1.7" fill="url(#gbI)" stroke="#b9c8f4" stroke-opacity="0.9" stroke-width="0.7"/><rect x="302.86" y="312.36" width="5.28" height="4.78" fill="none" stroke="#f2f4fd" stroke-width="0.8"/><rect x="302.46" y="311.56" width="6.08" height="1.6" fill="#f2f4fd"/><rect x="314.05" y="309.35" width="10.30" height="10.30" rx="1.7" fill="url(#gcI)" stroke="#d2bcd6" stroke-opacity="0.9" stroke-width="0.7"/><path d="M316.06 311.37L322.33 317.63M322.33 311.37L316.06 317.63" stroke="#f2f4fd" stroke-width="1.5" fill="none"/><text x="16.00" y="317.16" transform="rotate(0.04 16.0 317.2)" font-size="7.7" fill="#eef1fc" font-weight="bold" textLength="144.00" lengthAdjust="spacingAndGlyphs">CF 1:Ctrl BD 1 (HML) - Unknown Sample</text><text x="9.97" y="336.21" transform="rotate(0.04 10.0 336.2)" font-size="5.2" fill="#2a2a2a" font-weight="bold" textLength="14.25" lengthAdjust="spacingAndGlyphs">Fn List</text><text x="34.43" y="336.21" transform="rotate(0.04 34.4 336.2)" font-size="5.2" fill="#2a2a2a" font-weight="bold" textLength="12.14" lengthAdjust="spacingAndGlyphs">Order</text><text x="57.12" y="336.21" transform="rotate(0.04 57.1 336.2)" font-size="5.2" fill="#2a2a2a" font-weight="bold" textLength="14.25" lengthAdjust="spacingAndGlyphs">Cursor</text><text x="83.71" y="336.21" transform="rotate(0.04 83.7 336.2)" font-size="5.2" fill="#2a2a2a" font-weight="bold" textLength="11.88" lengthAdjust="spacingAndGlyphs">Scale</text><text x="109.76" y="336.21" transform="rotate(0.04 109.8 336.2)" font-size="5.2" fill="#2a2a2a" font-weight="bold" textLength="9.77" lengthAdjust="spacingAndGlyphs">Auto</text><text x="134.11" y="336.21" transform="rotate(0.04 134.1 336.2)" font-size="5.2" fill="#2a2a2a" font-weight="bold" textLength="11.88" lengthAdjust="spacingAndGlyphs">Exact</text><text x="160.23" y="336.21" transform="rotate(0.04 160.2 336.2)" font-size="5.2" fill="#2a2a2a" font-weight="bold" textLength="12.14" lengthAdjust="spacingAndGlyphs">Zoom</text><text x="188.42" y="336.21" transform="rotate(0.04 188.4 336.2)" font-size="5.2" fill="#2a2a2a" font-weight="bold" textLength="9.77" lengthAdjust="spacingAndGlyphs">Print</text><text x="214.06" y="336.21" transform="rotate(0.04 214.1 336.2)" font-size="5.2" fill="#2a2a2a" font-weight="bold" textLength="8.18" lengthAdjust="spacingAndGlyphs">Clip</text><text x="236.14" y="336.21" transform="rotate(0.04 236.1 336.2)" font-size="5.2" fill="#2a2a2a" font-weight="bold" textLength="13.73" lengthAdjust="spacingAndGlyphs">Export</text><rect x="4.50" y="309.00" width="9.80" height="10.00" fill="#2a2e48" opacity="0.55"/><rect x="5.30" y="309.80" width="9.00" height="9.20" fill="#1c2038" opacity="0.7"/><rect x="4.80" y="309.30" width="8.80" height="9.00" fill="#fff"/><path d="M5.8 310.6C7.4 310.8 7.6 314.6 9.4 314.8L12.8 314.8" stroke="#f03030" stroke-width="0.7" fill="none"/><path d="M5.4 310V316.4H13" stroke="#2828c8" stroke-width="0.7" fill="none"/><path d="M48.10 354.40L48.10 551.40" stroke="#0c0c98" stroke-width="0.8" fill="none"/><path d="M46.90 354.40L48.10 354.40" stroke="#0c0c98" stroke-width="0.6" fill="none"/><path d="M46.90 551.40L48.10 551.40" stroke="#0c0c98" stroke-width="0.6" fill="none"/><path d="M48.10 551.40L314.60 551.40" stroke="#0c0c98" stroke-width="0.8" fill="none"/><path d="M48.10 512.10L314.60 512.10" stroke="#0c0c98" stroke-width="0.8" fill="none"/><path d="M92.52 354.40V553.00" stroke="#0c0c98" stroke-width="0.7" stroke-dasharray="1.75 1.75" fill="none"/><path d="M136.94 354.40V553.00" stroke="#0c0c98" stroke-width="0.7" stroke-dasharray="1.75 1.75" fill="none"/><path d="M181.36 354.40V553.00" stroke="#0c0c98" stroke-width="0.7" stroke-dasharray="1.75 1.75" fill="none"/><path d="M225.78 354.40V553.00" stroke="#0c0c98" stroke-width="0.7" stroke-dasharray="1.75 1.75" fill="none"/><path d="M270.20 354.40V553.00" stroke="#0c0c98" stroke-width="0.7" stroke-dasharray="1.75 1.75" fill="none"/><path d="M314.62 354.40V553.00" stroke="#0c0c98" stroke-width="0.7" stroke-dasharray="1.75 1.75" fill="none"/><text x="18.70" y="357.58" transform="rotate(0.04 18.7 357.6)" font-size="6.1" fill="#1c1c8c" textLength="24.00" lengthAdjust="spacingAndGlyphs" stroke="#1c1c8c" stroke-width="0.18">5.00e-01</text><text x="16.60" y="553.78" transform="rotate(0.04 16.6 553.8)" font-size="6.1" fill="#1c1c8c" textLength="26.10" lengthAdjust="spacingAndGlyphs" stroke="#1c1c8c" stroke-width="0.18">-1.25e-01</text><text x="28.50" y="451.88" transform="rotate(0.04 28.5 451.9)" font-size="6.1" fill="#1c1c8c" textLength="10.70" lengthAdjust="spacingAndGlyphs" stroke="#1c1c8c" stroke-width="0.18">C(τ)</text><text x="47.20" y="562.18" transform="rotate(0.04 47.2 562.2)" font-size="6.1" fill="#1c1c8c" textLength="16.40" lengthAdjust="spacingAndGlyphs" stroke="#1c1c8c" stroke-width="0.18">1.0 µs</text><text x="304.80" y="562.18" transform="rotate(0.04 304.8 562.2)" font-size="6.1" fill="#1c1c8c" textLength="12.60" lengthAdjust="spacingAndGlyphs" stroke="#1c1c8c" stroke-width="0.18">1.0 s</text><text x="173.60" y="570.58" transform="rotate(0.04 173.6 570.6)" font-size="9.5" fill="#1c1c8c" font-style="italic" textLength="4.40" lengthAdjust="spacingAndGlyphs" style="font-family:'Liberation Serif',serif">τ</text><path d="M78.50 364.17h1.3M91.87 364.73h1.3M99.69 365.30h1.3M105.24 365.86h1.3M109.55 366.42h1.3M113.06 366.97h1.3M116.04 367.53h1.3M118.61 368.08h1.3M119.70 368.34h1.3M120.79 368.61h1.3M121.88 368.89h1.3M122.96 369.19h1.3M124.05 369.51h1.3M125.14 369.84h1.3M126.23 370.20h1.3M127.31 370.57h1.3M128.40 370.96h1.3M129.49 371.38h1.3M130.58 371.82h1.3M131.67 372.28h1.3M132.75 372.77h1.3M133.84 373.28h1.3M134.93 373.82h1.3M136.02 374.39h1.3M137.10 374.99h1.3M138.19 375.62h1.3M139.28 376.28h1.3M140.37 376.98h1.3M141.45 377.72h1.3M142.54 378.49h1.3M143.63 379.31h1.3M144.72 380.16h1.3M145.80 381.06h1.3M146.89 382.01h1.3M147.98 383.00h1.3M149.07 384.04h1.3M150.16 385.13h1.3M151.24 386.27h1.3M152.33 387.47h1.3M153.42 388.72h1.3M154.51 390.03h1.3M155.59 391.40h1.3M156.68 392.83h1.3M157.77 394.33h1.3M158.86 395.89h1.3M159.94 397.52h1.3M161.03 399.22h1.3M162.12 400.98h1.3M163.21 402.82h1.3M164.29 404.72h1.3M165.38 406.70h1.3M166.47 408.75h1.3M167.56 410.88h1.3M168.65 413.07h1.3M169.73 415.34h1.3M170.82 417.68h1.3M171.91 420.09h1.3M173.00 422.56h1.3M174.08 425.11h1.3M175.17 427.71h1.3M176.26 430.38h1.3M177.35 433.10h1.3M178.43 435.87h1.3M179.52 438.68h1.3M180.61 441.54h1.3M181.70 444.44h1.3M182.79 447.36h1.3M183.87 450.30h1.3M184.96 453.25h1.3M186.05 456.20h1.3M187.14 459.15h1.3M188.22 462.08h1.3M189.31 464.99h1.3M190.40 467.86h1.3M191.49 470.69h1.3M192.57 473.46h1.3M193.66 476.17h1.3M194.75 478.80h1.3M195.84 481.34h1.3M196.92 483.80h1.3M198.01 486.15h1.3M199.10 488.14h1.3M200.19 490.03h1.3M201.28 492.74h1.3M202.36 493.81h1.3M203.45 496.22h1.3M204.54 497.62h1.3M205.63 498.69h1.3M206.71 500.71h1.3M207.80 501.32h1.3M208.89 503.02h1.3M209.98 503.55h1.3M211.06 504.51h1.3M212.15 505.82h1.3M213.24 507.13h1.3M214.33 506.81h1.3M215.41 507.54h1.3M216.50 508.63h1.3M217.59 509.54h1.3M218.68 509.43h1.3M219.77 509.54h1.3M220.85 510.68h1.3M221.94 509.66h1.3M223.03 511.05h1.3M224.12 510.48h1.3M225.20 510.48h1.3M226.29 510.61h1.3M227.38 511.03h1.3M228.47 511.88h1.3M229.55 511.11h1.3M230.64 511.77h1.3M231.73 511.94h1.3M232.82 511.64h1.3M233.90 511.94h1.3M234.99 511.31h1.3M236.08 511.35h1.3M237.17 511.59h1.3M238.26 512.28h1.3M239.34 511.94h1.3M240.43 511.80h1.3M241.52 512.19h1.3M242.61 512.02h1.3M243.69 511.81h1.3M244.78 512.50h1.3M245.87 512.37h1.3M246.96 511.74h1.3M248.04 512.20h1.3M249.13 512.13h1.3M250.22 512.62h1.3M251.31 512.42h1.3M252.39 511.80h1.3M253.48 512.77h1.3M254.57 511.57h1.3M255.66 511.99h1.3M256.75 512.46h1.3M257.83 511.61h1.3M258.92 512.08h1.3M260.01 511.45h1.3M261.10 512.34h1.3M262.18 512.47h1.3M263.27 512.20h1.3M264.36 512.63h1.3M265.45 511.84h1.3M266.53 512.37h1.3M267.62 512.23h1.3M268.71 512.21h1.3M269.80 512.04h1.3M296.40 511.90h1.2" stroke="#ff0808" stroke-width="1.4" fill="none"/></svg></div>
<div class="l"><svg width="750" height="600" viewBox="0 0 750 600"><path d="M1.00 304.60V31.40Q1.00 27.80 4.60 27.80H235.30Q238.90 27.80 238.90 31.40V304.60Z" fill="#0026b4"/><path d="M1.70 303.80V31.34Q1.70 28.10 4.94 28.10H234.96Q238.20 28.10 238.20 31.34V303.80Z" fill="#0a48e2"/><path d="M1.30 46.40V31.40Q1.30 27.80 4.90 27.80H235.00Q238.60 27.80 238.60 31.40V46.40Z" fill="url(#gtA)"/><rect x="3.20" y="46.40" width="233.50" height="255.60" fill="#dcd8c4"/><rect x="4.00" y="46.40" width="231.90" height="254.90" fill="#fff"/><rect x="3.70" y="46.10" width="231.80" height="21.60" fill="#3e3c32"/><rect x="4.70" y="47.30" width="229.80" height="19.30" fill="#aca899"/><rect x="6.70" y="49.40" width="17.20" height="16.50" fill="#2c2b24"/><rect x="7.80" y="50.50" width="15.00" height="14.30" fill="#ece9d8"/><path d="M8.20 64.40V50.90H22.40" stroke="#fff" stroke-width="0.8" fill="none"/><path d="M8.20 64.40H22.40V50.90" stroke="#9a9788" stroke-width="0.8" fill="none"/><rect x="26.70" y="49.40" width="18.80" height="16.50" fill="#ece9d8"/><path d="M27.10 65.50V49.80H45.10" stroke="#fff" stroke-width="0.8" fill="none"/><path d="M27.10 65.50H45.10V49.80" stroke="#8a8778" stroke-width="0.8" fill="none"/><rect x="47.80" y="49.40" width="19.70" height="16.50" fill="#ece9d8"/><path d="M48.20 65.50V49.80H67.10" stroke="#fff" stroke-width="0.8" fill="none"/><path d="M48.20 65.50H67.10V49.80" stroke="#8a8778" stroke-width="0.8" fill="none"/><rect x="69.40" y="49.40" width="20.60" height="16.50" fill="#ece9d8"/><path d="M69.80 65.50V49.80H89.60" stroke="#fff" stroke-width="0.8" fill="none"/><path d="M69.80 65.50H89.60V49.80" stroke="#8a8778" stroke-width="0.8" fill="none"/><rect x="91.40" y="49.40" width="22.20" height="16.50" fill="#ece9d8"/><path d="M91.80 65.50V49.80H113.20" stroke="#fff" stroke-width="0.8" fill="none"/><path d="M91.80 65.50H113.20V49.80" stroke="#8a8778" stroke-width="0.8" fill="none"/><rect x="116.20" y="49.40" width="20.00" height="16.50" fill="#ece9d8"/><path d="M116.60 65.50V49.80H135.80" stroke="#fff" stroke-width="0.8" fill="none"/><path d="M116.60 65.50H135.80V49.80" stroke="#8a8778" stroke-width="0.8" fill="none"/><rect x="138.00" y="49.40" width="20.00" height="16.50" fill="#ece9d8"/><path d="M138.40 65.50V49.80H157.60" stroke="#fff" stroke-width="0.8" fill="none"/><path d="M138.40 65.50H157.60V49.80" stroke="#8a8778" stroke-width="0.8" fill="none"/><rect x="159.60" y="49.40" width="19.60" height="16.50" fill="#ece9d8"/><path d="M160.00 65.50V49.80H178.80" stroke="#fff" stroke-width="0.8" fill="none"/><path d="M160.00 65.50H178.80V49.80" stroke="#8a8778" stroke-width="0.8" fill="none"/><rect x="181.00" y="49.40" width="19.20" height="16.50" fill="#ece9d8"/><path d="M181.40 65.50V49.80H199.80" stroke="#fff" stroke-width="0.8" fill="none"/><path d="M181.40 65.50H199.80V49.80" stroke="#8a8778" stroke-width="0.8" fill="none"/><rect x="202.40" y="49.40" width="19.60" height="16.50" fill="#ece9d8"/><path d="M202.80 65.50V49.80H221.60" stroke="#fff" stroke-width="0.8" fill="none"/><path d="M202.80 65.50H221.60V49.80" stroke="#8a8778" stroke-width="0.8" fill="none"/><rect x="196.95" y="32.35" width="10.90" height="10.70" rx="1.7" fill="url(#gbA)" stroke="#e6ecfc" stroke-opacity="0.95" stroke-width="0.7"/><rect x="199.38" y="39.18" width="4.41" height="1.6" fill="#fff"/><rect x="210.45" y="32.35" width="10.80" height="10.70" rx="1.7" fill="url(#gbA)" stroke="#e6ecfc" stroke-opacity="0.95" stroke-width="0.7"/><rect x="213.09" y="35.49" width="5.52" height="4.92" fill="none" stroke="#fff" stroke-width="0.8"/><rect x="212.69" y="34.69" width="6.32" height="1.6" fill="#fff"/><rect x="223.95" y="32.35" width="10.60" height="10.70" rx="1.7" fill="url(#gcA)" stroke="#e6ecfc" stroke-opacity="0.95" stroke-width="0.7"/><path d="M226.03 34.48L232.47 40.92M232.47 34.48L226.03 40.92" stroke="#fff" stroke-width="1.5" fill="none"/><text x="16.00" y="41.26" transform="rotate(0.04 16.0 41.3)" font-size="7.7" fill="#fff" font-weight="bold" textLength="124.70" lengthAdjust="spacingAndGlyphs">Ctrl BD 1 (HML) - Unknown Sample</text><text x="30.42" y="59.71" transform="rotate(0.04 30.4 59.7)" font-size="5.2" fill="#2a2a2a" font-weight="bold" textLength="11.35" lengthAdjust="spacingAndGlyphs">Clear</text><text x="53.82" y="59.71" transform="rotate(0.04 53.8 59.7)" font-size="5.2" fill="#2a2a2a" font-weight="bold" textLength="7.65" lengthAdjust="spacingAndGlyphs">Dur</text><text x="72.57" y="59.71" transform="rotate(0.04 72.6 59.7)" font-size="5.2" fill="#2a2a2a" font-weight="bold" textLength="14.26" lengthAdjust="spacingAndGlyphs">Layout</text><text x="94.45" y="59.71" transform="rotate(0.04 94.4 59.7)" font-size="5.2" fill="#2a2a2a" font-weight="bold" textLength="16.10" lengthAdjust="spacingAndGlyphs">M.Base</text><text x="119.33" y="59.71" transform="rotate(0.04 119.3 59.7)" font-size="5.2" fill="#2a2a2a" font-weight="bold" textLength="13.74" lengthAdjust="spacingAndGlyphs">Bound</text><text x="139.82" y="59.71" transform="rotate(0.04 139.8 59.7)" font-size="5.2" fill="#2a2a2a" font-weight="bold" textLength="16.37" lengthAdjust="spacingAndGlyphs">Params</text><text x="161.61" y="59.71" transform="rotate(0.04 161.6 59.7)" font-size="5.2" fill="#2a2a2a" font-weight="bold" textLength="15.57" lengthAdjust="spacingAndGlyphs">Display</text><text x="185.72" y="59.71" transform="rotate(0.04 185.7 59.7)" font-size="5.2" fill="#2a2a2a" font-weight="bold" textLength="9.77" lengthAdjust="spacingAndGlyphs">Print</text><text x="208.11" y="59.71" transform="rotate(0.04 208.1 59.7)" font-size="5.2" fill="#2a2a2a" font-weight="bold" textLength="8.18" lengthAdjust="spacingAndGlyphs">Clip</text><rect x="4.50" y="32.90" width="9.90" height="9.50" fill="#2a2e48" opacity="0.55"/><rect x="5.30" y="33.70" width="9.10" height="8.70" fill="#1c2038" opacity="0.7"/><rect x="4.80" y="33.20" width="8.90" height="8.50" fill="#fff"/><path d="M5.2 35.5H6.6C8.2 35.5 8.2 38.5 9.8 38.5H13.2" stroke="#f82828" stroke-width="0.9" fill="none"/><circle cx="15.3" cy="58.1" r="6.2" fill="#0c7c0c" stroke="#0a4a0a" stroke-width="0.5"/><text x="8.00" y="81.74" transform="rotate(0.04 8.0 81.7)" font-size="12.4" fill="#ff0000" textLength="57.30" lengthAdjust="spacingAndGlyphs" stroke="#ff0000" stroke-width="0.22">STOPPED</text><text x="7.40" y="98.34" transform="rotate(0.04 7.4 98.3)" font-size="12.4" fill="#15158a" textLength="63.60" lengthAdjust="spacingAndGlyphs" stroke="#15158a" stroke-width="0.25">First Delay:</text><text x="108.30" y="98.34" transform="rotate(0.04 108.3 98.3)" font-size="12.4" fill="#ff0000" textLength="46.70" lengthAdjust="spacingAndGlyphs" stroke="#ff0000" stroke-width="0.22">5.0 µsec</text><text x="7.40" y="114.74" transform="rotate(0.04 7.4 114.7)" font-size="12.4" fill="#15158a" textLength="62.60" lengthAdjust="spacingAndGlyphs" stroke="#15158a" stroke-width="0.25">Last Delay:</text><text x="108.30" y="114.74" transform="rotate(0.04 108.3 114.7)" font-size="12.4" fill="#ff0000" textLength="63.40" lengthAdjust="spacingAndGlyphs" stroke="#ff0000" stroke-width="0.22">100.0 msec</text><text x="7.40" y="131.14" transform="rotate(0.04 7.4 131.1)" font-size="12.4" fill="#15158a" textLength="77.60" lengthAdjust="spacingAndGlyphs" stroke="#15158a" stroke-width="0.25">Elapsed Time:</text><text x="108.30" y="131.14" transform="rotate(0.04 108.3 131.1)" font-size="12.4" fill="#ff0000" textLength="48.40" lengthAdjust="spacingAndGlyphs" stroke="#ff0000" stroke-width="0.22">00:02:00</text><text x="7.40" y="147.64" transform="rotate(0.04 7.4 147.6)" font-size="12.4" fill="#15158a" textLength="53.60" lengthAdjust="spacingAndGlyphs" stroke="#15158a" stroke-width="0.25">Viscosity:</text><text x="108.30" y="147.64" transform="rotate(0.04 108.3 147.6)" font-size="12.4" fill="#ff0000" textLength="48.40" lengthAdjust="spacingAndGlyphs" stroke="#ff0000" stroke-width="0.22">0.890 cP</text><text x="7.40" y="164.04" transform="rotate(0.04 7.4 164.0)" font-size="12.4" fill="#15158a" textLength="55.30" lengthAdjust="spacingAndGlyphs" stroke="#15158a" stroke-width="0.25">Ref Index:</text><text x="108.30" y="164.04" transform="rotate(0.04 108.3 164.0)" font-size="12.4" fill="#ff0000" textLength="30.00" lengthAdjust="spacingAndGlyphs" stroke="#ff0000" stroke-width="0.22">1.331</text><text x="7.40" y="180.34" transform="rotate(0.04 7.4 180.3)" font-size="12.4" fill="#15158a" textLength="49.90" lengthAdjust="spacingAndGlyphs" stroke="#15158a" stroke-width="0.25">Samples:</text><text x="108.30" y="180.34" transform="rotate(0.04 108.3 180.3)" font-size="12.4" fill="#ff0000" textLength="65.70" lengthAdjust="spacingAndGlyphs" stroke="#ff0000" stroke-width="0.22">2.2774e+07</text><text x="7.40" y="196.64" transform="rotate(0.04 7.4 196.6)" font-size="12.4" fill="#15158a" textLength="24.90" lengthAdjust="spacingAndGlyphs" stroke="#15158a" stroke-width="0.25">Atot:</text><text x="108.30" y="196.64" transform="rotate(0.04 108.3 196.6)" font-size="12.4" fill="#ff0000" textLength="65.70" lengthAdjust="spacingAndGlyphs" stroke="#ff0000" stroke-width="0.22">6.0030e+06</text><text x="7.40" y="213.04" transform="rotate(0.04 7.4 213.0)" font-size="12.4" fill="#15158a" textLength="67.60" lengthAdjust="spacingAndGlyphs" stroke="#15158a" stroke-width="0.25">A CR (avg.):</text><text x="108.30" y="213.04" transform="rotate(0.04 108.3 213.0)" font-size="12.4" fill="#ff0000" textLength="52.40" lengthAdjust="spacingAndGlyphs" stroke="#ff0000" stroke-width="0.22">52.7 kcps</text><text x="7.40" y="229.54" transform="rotate(0.04 7.4 229.5)" font-size="12.4" fill="#15158a" textLength="49.30" lengthAdjust="spacingAndGlyphs" stroke="#15158a" stroke-width="0.25">M. Base:</text><text x="108.30" y="229.54" transform="rotate(0.04 108.3 229.5)" font-size="12.4" fill="#ff0000" textLength="65.70" lengthAdjust="spacingAndGlyphs" stroke="#ff0000" stroke-width="0.22">1.5819e+06</text><text x="7.40" y="245.94" transform="rotate(0.04 7.4 245.9)" font-size="12.4" fill="#15158a" textLength="47.60" lengthAdjust="spacingAndGlyphs" stroke="#15158a" stroke-width="0.25">C. Base:</text><text x="108.30" y="245.94" transform="rotate(0.04 108.3 245.9)" font-size="12.4" fill="#ff0000" textLength="65.70" lengthAdjust="spacingAndGlyphs" stroke="#ff0000" stroke-width="0.22">1.5823e+06</text><text x="7.40" y="262.34" transform="rotate(0.04 7.4 262.3)" font-size="12.4" fill="#15158a" textLength="51.90" lengthAdjust="spacingAndGlyphs" stroke="#15158a" stroke-width="0.25">Base diff:</text><text x="108.30" y="262.34" transform="rotate(0.04 108.3 262.3)" font-size="12.4" fill="#ff0000" textLength="45.70" lengthAdjust="spacingAndGlyphs" stroke="#ff0000" stroke-width="0.22">-0.027%</text><text x="7.40" y="278.74" transform="rotate(0.04 7.4 278.7)" font-size="12.4" fill="#15158a" textLength="40.90" lengthAdjust="spacingAndGlyphs" stroke="#15158a" stroke-width="0.25">Eff Dia:</text><text x="108.30" y="278.74" transform="rotate(0.04 108.3 278.7)" font-size="12.4" fill="#ff0000" textLength="50.40" lengthAdjust="spacingAndGlyphs" stroke="#ff0000" stroke-width="0.22">441.4 nm</text><text x="7.40" y="295.14" transform="rotate(0.04 7.4 295.1)" font-size="12.4" fill="#15158a" textLength="26.90" lengthAdjust="spacingAndGlyphs" stroke="#15158a" stroke-width="0.25">Poly:</text><text x="108.30" y="295.14" transform="rotate(0.04 108.3 295.1)" font-size="12.4" fill="#ff0000" textLength="30.00" lengthAdjust="spacingAndGlyphs" stroke="#ff0000" stroke-width="0.22">0.227</text></svg></div>
<div class="l"><svg width="750" height="600" viewBox="0 0 750 600"><rect x="-20.00" y="581.60" width="790.00" height="18.90" fill="url(#gTask)"/><rect x="-20.00" y="600.00" width="790.00" height="20.00" fill="#1a45a8"/><path d="M0 581.6H50.5C54.5 581.6 56.6 585.1 56.6 589.6V597.5Q56.6 600.5 53.6 600.5H0Z" fill="#0e2e86" opacity="0.55" transform="translate(0.9 0)"/><path d="M0 581.6H50.5C54.5 581.6 56.4 585.1 56.4 589.6V597.5Q56.4 600.5 53.4 600.5H0Z" fill="url(#gStart)"/><rect x="-20.00" y="600.00" width="76.00" height="20.00" fill="#2f842f"/><rect x="-20.00" y="581.60" width="20.50" height="18.90" fill="url(#gStart)"/><rect x="707.00" y="581.60" width="63.00" height="18.90" fill="url(#gTray)"/><rect x="707.00" y="600.00" width="63.00" height="20.00" fill="#0c86d4"/><rect x="706.60" y="581.60" width="0.90" height="18.90" fill="#0a4a9a"/><rect x="116.6" y="584.4" width="92.2" height="14.4" rx="1.6" fill="#1e4fbe"/><path d="M117 598.4V585.4Q117 584.8 117.8 584.8H208.4" stroke="#123a98" stroke-width="0.9" fill="none"/><rect x="210.4" y="584.4" width="91.8" height="14.4" rx="1.6" fill="url(#gTb2)"/><path d="M7.6 587.2c1.5-1 3-1 4.5 0l-0.9 3.7c-1.5-1-3-1-4.5 0z" fill="#f0562a"/><path d="M12.7 587.5c1.5 1 3 1 4.5 0l-0.9 3.7c-1.5 1-3 1-4.5 0z" fill="#7acb48"/><path d="M6.5 591.5c1.5-1 3-1 4.5 0l-0.9 3.7c-1.5-1-3-1-4.5 0z" fill="#4c8cf4"/><path d="M11.6 591.8c1.5 1 3 1 4.5 0l-0.9 3.7c-1.5 1-3 1-4.5 0z" fill="#f9d23e"/><text x="20.60" y="594.82" transform="rotate(0.04 20.6 594.8)" font-size="10.4" fill="#1c4a1c" font-weight="bold" font-style="italic" textLength="22.60" lengthAdjust="spacingAndGlyphs" opacity="0.7">start</text><text x="20.00" y="594.32" transform="rotate(0.04 20.0 594.3)" font-size="10.4" fill="#fff" font-weight="bold" font-style="italic" textLength="22.60" lengthAdjust="spacingAndGlyphs">start</text><rect x="64.4" y="587.4" width="7.6" height="7.4" rx="1.4" fill="#dfeaf8" stroke="#6a9ae0" stroke-width="0.5"/><circle cx="68.2" cy="591.2" r="2.2" fill="#4aa0e8"/><circle cx="71.6" cy="588.6" r="1" fill="#e06a30"/><rect x="79.4" y="587" width="5.6" height="5.6" rx="0.8" fill="#bfe0f8" stroke="#e8f2fc" stroke-width="0.6"/><path d="M80.6 594.6h3.4l-0.6-1.8h-2.2z" fill="#dfe8f4"/><circle cx="95.6" cy="591.4" r="3.3" fill="none" stroke="#5ab4f4" stroke-width="1.5"/><path d="M92.4 591.6h6" stroke="#5ab4f4" stroke-width="1.1"/><path d="M91.4 593.6c2-5 6.4-6.6 8.4-5.4" stroke="#8ad0fa" stroke-width="0.7" fill="none"/><path d="M107.4 587.2l1.2 1.2l-1.2 1.2M109.4 587.2l1.2 1.2l-1.2 1.2" stroke="#cfe0fa" stroke-width="0.6" fill="none"/><rect x="122" y="587.6" width="7.2" height="8" fill="#e0101c"/><path d="M123.4 589h2M124.4 589v5.2M123.4 594.2h2M128 589.2h-1.4v4.8h1.4" stroke="#7a0008" stroke-width="0.8" fill="none"/><rect x="216" y="587.4" width="7.6" height="8.2" fill="#f4f6fa" stroke="#30406a" stroke-width="0.5"/><text x="217.20" y="593.75" transform="rotate(0.04 217.2 593.7)" font-size="6.0" fill="#1c3a9a" font-weight="bold" textLength="5.40" lengthAdjust="spacingAndGlyphs">W</text><text x="133.60" y="593.86" transform="rotate(0.04 133.6 593.9)" font-size="6.3" fill="#fff" textLength="68.20" lengthAdjust="spacingAndGlyphs">Brookhaven Instrume...</text><text x="227.40" y="593.86" transform="rotate(0.04 227.4 593.9)" font-size="6.3" fill="#fff" textLength="67.20" lengthAdjust="spacingAndGlyphs">Document1 - Microsof...</text><circle cx="706.2" cy="591.6" r="4.6" fill="#2f7ae8" stroke="#bfe0fc" stroke-width="0.7"/><path d="M707.2 589.4l-2.2 2.2l2.2 2.2" stroke="#fff" stroke-width="1.1" fill="none"/><text x="715.60" y="593.96" transform="rotate(0.04 715.6 594.0)" font-size="6.3" fill="#fff" textLength="26.00" lengthAdjust="spacingAndGlyphs">12:33 PM</text></svg></div>
</div></div></body></html>
